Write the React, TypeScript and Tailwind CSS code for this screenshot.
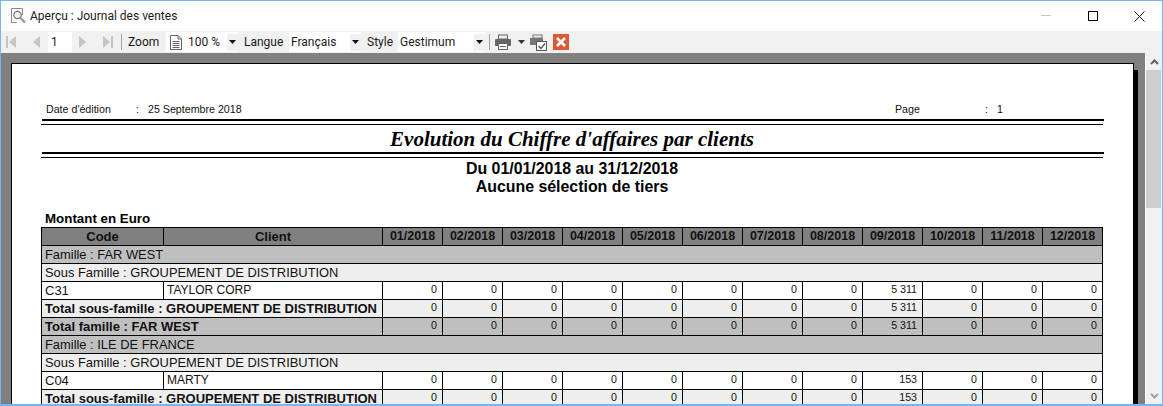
import React from "react";

const months = ["01/2018","02/2018","03/2018","04/2018","05/2018","06/2018","07/2018","08/2018","09/2018","10/2018","11/2018","12/2018"];

function Vals({ v, bg }: { v: string; bg: string }) {
  return (
    <>
      {months.map((m, i) => (
        <td key={m} className={`border border-black ${bg} text-right pr-[5px] pl-0 py-0 text-[10.67px] leading-[15px] pb-[2px] text-[#111] align-middle`}>
          {i === 8 ? v : "0"}
        </td>
      ))}
    </>
  );
}

function Band({ text, bg }: { text: string; bg: string }) {
  return (
    <tr className="h-[18px]">
      <td colSpan={14} className={`border border-black ${bg} px-[3px] py-0 text-[12.9px] leading-[17px] text-[#111]`}>{text}</td>
    </tr>
  );
}

function Detail({ code, name, v }: { code: string; name: string; v: string }) {
  return (
    <tr className="h-[18px]">
      <td className="border border-black bg-white px-[3px] py-0 text-[13px] leading-[17px]">{code}</td>
      <td className="border border-black bg-white px-[3px] py-0 text-[12px] leading-[16px] pb-[1px] text-[#111]">{name}</td>
      <Vals v={v} bg="bg-white" />
    </tr>
  );
}

function Total({ text, v, bg }: { text: string; v: string; bg: string }) {
  return (
    <tr className="h-[18px]">
      <td colSpan={2} className={`border border-black ${bg} px-[3px] py-0 text-[13px] leading-[17px] font-bold text-[#111] whitespace-nowrap overflow-hidden`}>{text}</td>
      <Vals v={v} bg={bg} />
    </tr>
  );
}

function Rules() {
  return (
    <div className="flex flex-col ml-[30px] w-[1063px]">
      <div className="h-[2px] bg-black ml-px" />
      <div className="h-[3px]" />
      <div className="h-px bg-black w-[1062px]" />
    </div>
  );
}

function Nav({ flip, bar }: { flip?: boolean; bar?: boolean }) {
  return (
    <svg width="12" height="16" viewBox="0 0 12 16" className={`shrink-0 ${flip ? "-scale-x-100" : ""}`}>
      {bar && <rect x="0" y="2" width="2" height="12" fill="#c4c4c4" />}
      <path d="M10 2 L3 8 L10 14 Z" fill="#c4c4c4" />
    </svg>
  );
}

function Caret() {
  return (
    <div className="w-[11px] h-[17px] bg-[#f0f0f0] flex items-center justify-center shrink-0">
      <svg width="7" height="4" viewBox="0 0 7 4"><path d="M0 0H7L3.5 4Z" fill="#111" /></svg>
    </div>
  );
}

function Sep() {
  return <div className="w-px h-[16px] bg-[#a0a0a0] shrink-0" />;
}

export default function App() {
  const ui = { fontFamily: 'Roboto,"Noto Sans",sans-serif' };
  return (
    <div className="w-[1163px] h-[406px] overflow-hidden flex flex-col border border-[#78b4ee] border-b-[2px] bg-white" style={{ fontFamily: '"Liberation Sans",Arial,sans-serif' }}>
      <div className="h-[30px] shrink-0 flex items-center bg-white pl-[9px]">
        <svg width="16" height="16" viewBox="0 0 16 16" className="shrink-0">
          <path d="M1.5 0.5H12.5V7M7 14.5H1.5V0.5" fill="none" stroke="#8a8a8a" />
          <circle cx="7.5" cy="7" r="3.7" fill="#f2f2f2" stroke="#777" strokeWidth="1.3" />
          <path d="M10.5 10L15 14.5" stroke="#9a9a9a" strokeWidth="2.4" />
        </svg>
        <span className="ml-[4px] text-[12px] text-[#1a1a1a]" style={ui}>Aperçu : Journal des ventes</span>
        <div className="ml-auto flex items-center">
          <svg width="12" height="2" viewBox="0 0 12 2" className="mr-[35px]"><rect width="10" height="1" fill="#c8c8c8" /></svg>
          <svg width="10" height="10" viewBox="0 0 10 10" className="mr-[36px]"><rect x="0.5" y="0.5" width="9" height="9" fill="none" stroke="#000" /></svg>
          <svg width="11" height="11" viewBox="0 0 11 11" className="mr-[17px]"><path d="M0.5 0.5L10.5 10.5M10.5 0.5L0.5 10.5" stroke="#111" /></svg>
        </div>
      </div>

      <div className="h-[22px] shrink-0 bg-[#f0f0f0] flex items-center text-[12px] text-[#1a1a1a] pl-[5px]" style={ui}>
        <Nav bar />
        <div className="ml-[12px]"><Nav /></div>
        <div className="ml-[6px] w-[24px] h-[20px] bg-white pl-[3px] leading-[20px]">1</div>
        <div className="ml-[5px]"><Nav flip /></div>
        <div className="ml-[12px]"><Nav flip bar /></div>
        <div className="ml-[8px]"><Sep /></div>
        <span className="ml-[6px] w-[32px] whitespace-nowrap">Zoom</span>
        <div className="ml-[6px] w-[72px] h-[20px] bg-white flex items-center pl-[4px]">
          <svg width="12" height="15" viewBox="0 0 12 15" className="shrink-0"><path d="M0.5 0.5H8L11.5 4V14.5H0.5ZM8 0.5V4H11.5M2.5 6.5H9.5M2.5 8.5H9.5M2.5 10.5H9.5M2.5 12.5H9.5" fill="none" stroke="#666" /></svg>
          <span className="ml-[6px] whitespace-nowrap">100 %</span>
          <div className="ml-auto"><Caret /></div>
        </div>
        <span className="ml-[6px] w-[39px] whitespace-nowrap">Langue</span>
        <div className="ml-[6px] w-[72px] h-[20px] bg-white flex items-center pl-[2px]">
          <span>Français</span>
          <div className="ml-auto"><Caret /></div>
        </div>
        <span className="ml-[6px] w-[25px] whitespace-nowrap">Style</span>
        <div className="ml-[6px] w-[87px] h-[20px] bg-white flex items-center pl-[2px]">
          <span>Gestimum</span>
          <div className="ml-auto"><Caret /></div>
        </div>
        <div className="ml-[4px]"><Sep /></div>
        <svg width="16" height="16" viewBox="0 0 16 16" className="ml-[5px] shrink-0">
          <rect x="3.5" y="1" width="9" height="4" fill="#f0f0f0" stroke="#666" />
          <rect x="0" y="5" width="16" height="7" rx="1" fill="#666" />
          <rect x="3.5" y="9.5" width="9" height="6" fill="#fff" stroke="#666" />
          <path d="M5 12.5H11" stroke="#666" />
        </svg>
        <svg width="7" height="4" viewBox="0 0 7 4" className="ml-[7px] shrink-0"><path d="M0 0H7L3.5 4Z" fill="#333" /></svg>
        <svg width="17" height="17" viewBox="0 0 17 17" className="ml-[5px] shrink-0">
          <rect x="3" y="1" width="9" height="3" fill="#f0f0f0" stroke="#777" />
          <rect x="0" y="4" width="13" height="7" fill="#777" />
          <rect x="6.5" y="7.5" width="10" height="9" fill="#fff" stroke="#555" />
          <path d="M8.5 12L11 14.5L15 9.5" fill="none" stroke="#555" strokeWidth="1.3" />
        </svg>
        <div className="ml-[6px] w-[16px] h-[16px] bg-[#dc5a32] flex items-center justify-center shrink-0">
          <svg width="10" height="10" viewBox="0 0 10 10"><path d="M1 1L9 9M9 1L1 9" stroke="#fff" strokeWidth="2.6" /></svg>
        </div>
      </div>

      <div className="flex-1 min-h-0 flex overflow-hidden">
        <div className="w-[1144px] bg-[#808080] pt-[10px] pl-[10px] overflow-hidden relative">
          <div className="absolute left-[1132px] top-[17px] w-[5px] h-[400px] bg-black" />
          <div className="w-[1123px] h-[400px] bg-white border border-black relative">
            <div className="ml-[-1px] pt-[38px] text-[10.67px] leading-[12px] text-[#111]">
              <div className="flex ml-[35px] h-[13px] items-center">
                <span className="w-[90px]">Date d'édition</span>
                <span className="w-[12px]">:</span>
                <span className="w-[747px]">25 Septembre 2018</span>
                <span className="w-[90px]">Page</span>
                <span className="w-[12px]">:</span>
                <span>1</span>
              </div>
              <div className="h-[4px]" />
              <Rules />
              <div className="h-[27px] ml-[30px] w-[1062px] flex items-center justify-center text-[21px] font-bold italic text-black" style={{ fontFamily: '"Liberation Serif","Times New Roman",serif' }}>
                Evolution du Chiffre d'affaires par clients
              </div>
              <Rules />
              <div className="ml-[30px] w-[1062px] mt-[2px] text-center text-[15.9px] leading-[18px] font-bold text-black">
                <div>Du 01/01/2018 au 31/12/2018</div>
                <div>Aucune sélection de tiers</div>
              </div>
              <div className="ml-[34px] mt-[16px] h-[15px] text-[13.33px] leading-[14px] font-bold text-black">Montant en Euro</div>
              <table className="ml-[30px] border-collapse table-fixed w-[1061px]">
                <colgroup>
                  <col className="w-[122px]" />
                  <col className="w-[219px]" />
                  {months.map((m) => <col key={m} className="w-[60px]" />)}
                </colgroup>
                <thead>
                  <tr className="h-[18px] bg-[#808080]">
                    <th className="border border-black p-0 text-[13px] leading-[17px] font-bold text-[#111]">Code</th>
                    <th className="border border-black p-0 text-[13px] leading-[17px] font-bold text-[#111]">Client</th>
                    {months.map((m) => <th key={m} className="border border-black p-0 text-[12.5px] leading-[17px] font-bold text-[#111]">{m}</th>)}
                  </tr>
                </thead>
                <tbody>
                  <Band text="Famille : FAR WEST" bg="bg-[#bfbfbf]" />
                  <Band text="Sous Famille : GROUPEMENT DE DISTRIBUTION" bg="bg-[#eeeeee]" />
                  <Detail code="C31" name="TAYLOR CORP" v="5 311" />
                  <Total text="Total sous-famille : GROUPEMENT DE DISTRIBUTION" v="5 311" bg="bg-[#eeeeee]" />
                  <Total text="Total famille : FAR WEST" v="5 311" bg="bg-[#bfbfbf]" />
                  <Band text="Famille : ILE DE FRANCE" bg="bg-[#bfbfbf]" />
                  <Band text="Sous Famille : GROUPEMENT DE DISTRIBUTION" bg="bg-[#eeeeee]" />
                  <Detail code="C04" name="MARTY" v="153" />
                  <Total text="Total sous-famille : GROUPEMENT DE DISTRIBUTION" v="153" bg="bg-[#eeeeee]" />
                </tbody>
              </table>
            </div>
          </div>
        </div>
        <div className="w-[1px] bg-white" />
        <div className="flex-1 bg-[#f0f0f0] flex flex-col">
          <div className="h-[17px] flex items-center justify-center">
            <svg width="9" height="6" viewBox="0 0 9 6"><path d="M1 5L4.5 1.5L8 5" fill="none" stroke="#606060" strokeWidth="2" /></svg>
          </div>
          <div className="h-[138px] bg-[#cdcdcd] mr-px" />
          <div className="mt-auto h-[17px] flex items-center justify-center">
            <svg width="9" height="6" viewBox="0 0 9 6"><path d="M1 1L4.5 4.5L8 1" fill="none" stroke="#a0a0a0" strokeWidth="2" /></svg>
          </div>
        </div>
      </div>
    </div>
  );
}
